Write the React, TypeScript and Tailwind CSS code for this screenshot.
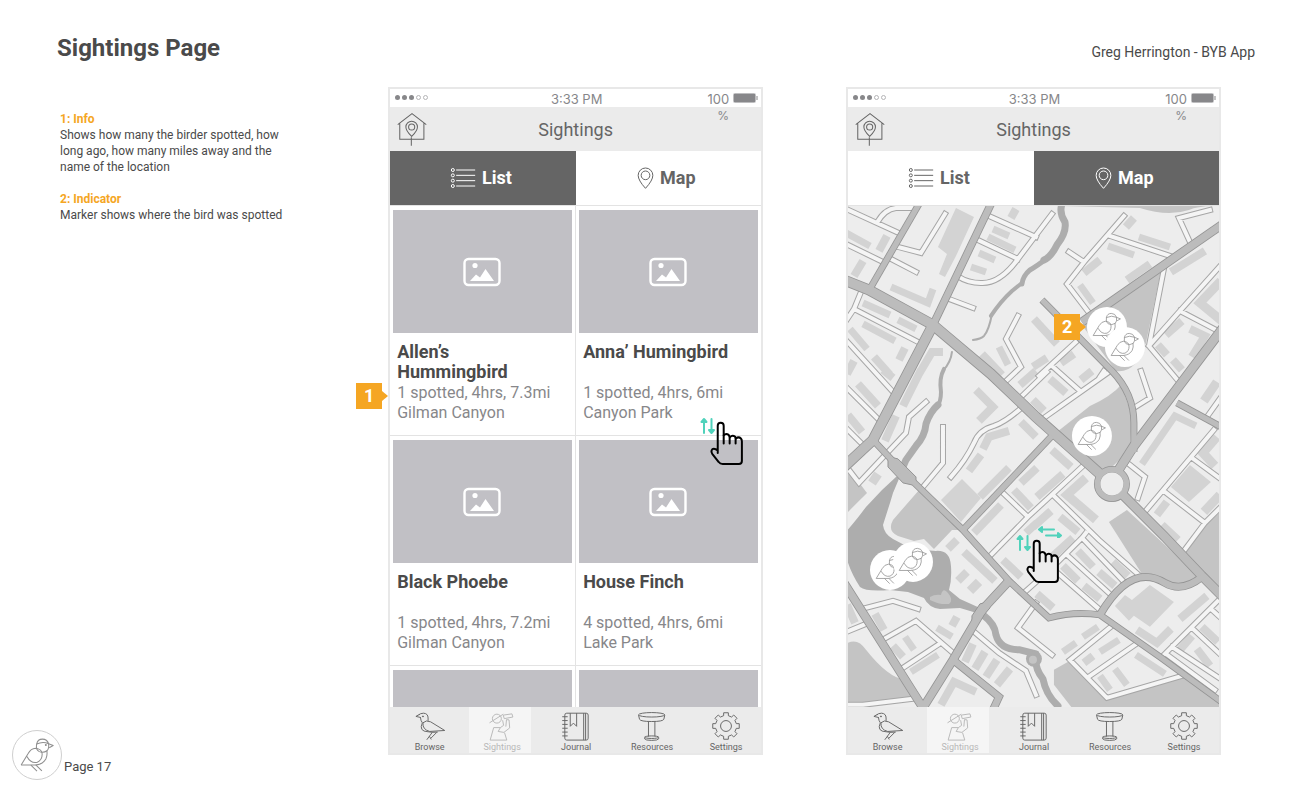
import type { ReactNode } from "react";

/* ---------- icons ---------- */

function Sparrow({ className }: { className: string }) {
  return (
    <svg viewBox="56 102 116 118" className={className} fill="none" stroke="currentColor" strokeWidth="3.4" strokeLinejoin="round" aria-hidden="true">
      <path d="M62 194 L85 156 Q94 140 109 139 Q130 141 131 158 Q131 178 115 185 Q94 190 81 166" />
      <path d="M62 194 H108 Q133 192 143 174 Q149 162 146 146" />
      <path d="M113 124 Q109 143 120 149 Q134 156 147 147 Q154 141 152 123" />
      <path d="M113 125 Q116 109 132 109 Q147 109 152 124 Q133 115 113 125Z" />
      <path d="M152 124 L167 130 L154 137" />
      <path d="M94 194 L114 214 M110 193 L130 213" />
      <circle cx="143" cy="128" r="1.6" fill="currentColor" />
    </svg>
  );
}

function Robin() {
  return (
    <svg viewBox="84 150 100 94" className="h-8 w-8" fill="none" stroke="currentColor" strokeWidth="3" strokeLinejoin="round" aria-hidden="true">
      <path d="M102 160 L90 167 L103 170 M99 163 Q103 157 114 157 Q128 158 128 172 V181" />
      <path d="M104 169 Q105 181 110 187 M112 187 Q122 177 136 184 L180 211 L133 214 Q110 208 112 187Z" />
      <path d="M110 187 Q98 214 128 215 Q140 218 158 216" />
      <path d="M141 217 L124 240 M155 217 L137 235 M132 229 L138 239" />
      <circle cx="112" cy="167" r="1.6" fill="currentColor" />
    </svg>
  );
}

function Birder() {
  return (
    <svg viewBox="312 150 100 94" className="h-8 w-8" fill="none" stroke="currentColor" strokeWidth="3" strokeLinejoin="round" aria-hidden="true">
      <circle cx="346" cy="174" r="14" />
      <path d="M323 187 L366 160 M366 163 L393 159 L396 169 L369 174Z" />
      <path d="M336 202 L325 241 H377 L370 218 M336 202 H357 L367 195 L364 179 M357 202 L350 214 L368 217 L386 203 L384 178 L376 177 L374 199" />
    </svg>
  );
}

function Notebook() {
  return (
    <svg viewBox="526 150 100 94" className="h-8 w-8" fill="none" stroke="currentColor" strokeWidth="3" strokeLinejoin="round" aria-hidden="true">
      <rect x="541" y="157" width="73" height="84" rx="6" />
      <path d="M600 157 V241 M606 157 V241 M558 157 V198 L568 188 L578 198 V157" />
      <path d="M533 168 H550 M533 180 H550 M533 192 H550 M533 204 H550 M533 216 H550 M533 228 H550" />
    </svg>
  );
}

function Stool() {
  return (
    <svg viewBox="757 150 100 94" className="h-8 w-8" fill="none" stroke="currentColor" strokeWidth="3" strokeLinejoin="round" aria-hidden="true">
      <ellipse cx="806" cy="162" rx="41" ry="7" />
      <path d="M765 163 L768 176 Q771 183 806 183 Q841 183 844 176 L847 163" />
      <path d="M796 183 V230 M816 183 V230" />
      <ellipse cx="806" cy="232" rx="22" ry="4" />
      <path d="M784 233 V237 Q786 242 806 242 Q826 242 828 237 V233" />
    </svg>
  );
}

function Gear() {
  const points: string[] = [];
  for (let i = 0; i < 8; i++) {
    for (const [offset, radius] of [[-13, 33], [-10, 42], [10, 42], [13, 33]]) {
      const angle = ((i * 45 + offset) * Math.PI) / 180;
      points.push(`${(50 + radius * Math.cos(angle)).toFixed(1)},${(47 + radius * Math.sin(angle)).toFixed(1)}`);
    }
  }
  return (
    <svg viewBox="0 0 100 94" className="h-8 w-8" fill="none" stroke="currentColor" strokeWidth="3" strokeLinejoin="round" aria-hidden="true">
      <polygon points={points.join(" ")} />
      <circle cx="50" cy="47" r="17" />
    </svg>
  );
}

function BirdhouseIcon() {
  return (
    <svg viewBox="40 86 88 100" className="h-[34px] w-[30px]" fill="none" stroke="currentColor" strokeWidth="3" aria-hidden="true">
      <path d="M42 123 L84 91 L126 123 M48 119 V166 H119 V119 M82 160 V185" />
      <circle cx="83" cy="130" r="9" />
      <path d="M83 158 Q66 141 66 130 A17 17 0 0 1 100 130 Q100 141 83 158Z" />
    </svg>
  );
}

function ListIcon() {
  return (
    <svg viewBox="198 250 77 66" className="h-[22px] w-[26px]" fill="none" stroke="currentColor" strokeWidth="3" aria-hidden="true">
      {[259, 275, 291, 307].map((y) => (
        <g key={y}>
          <circle cx="206" cy={y} r="4.5" />
          <path d={`M216 ${y} H273`} />
        </g>
      ))}
    </svg>
  );
}

function PinIcon() {
  return (
    <svg viewBox="762 250 50 66" className="h-[22px] w-[17px]" fill="none" stroke="currentColor" strokeWidth="3" aria-hidden="true">
      <circle cx="787" cy="275" r="13" />
      <path d="M787 314 Q765 290 765 275 A22 22 0 0 1 809 275 Q809 290 787 314Z" />
    </svg>
  );
}

function PictureIcon() {
  return (
    <svg viewBox="0 0 38 30" className="mr-[2px] h-[30px] w-[38px]" aria-hidden="true">
      <rect x="1.5" y="2" width="35" height="26" rx="4" fill="none" stroke="#fff" strokeWidth="2.4" />
      <circle cx="12" cy="8.5" r="2.6" fill="#fff" />
      <path d="M7 24 L13 17.5 L17 20.5 L22.5 12 L31 24Z" fill="#fff" />
    </svg>
  );
}

function Battery() {
  return (
    <svg viewBox="0 0 25 10" className="mt-1 h-[10px] w-[25px]" aria-hidden="true">
      <rect x="0.5" y="0.5" width="22" height="9" rx="1" fill="none" stroke="#bdbdbf" />
      <rect x="1" y="1" width="21" height="8" fill="#87878a" />
      <path d="M23.5 3 h1 v4 h-1z" fill="#87878a" />
    </svg>
  );
}

function Hand({ fill = "none" }: { fill?: string }) {
  return (
    <svg viewBox="980 275 102 136" className="h-[45px] w-[34px]" fill={fill} stroke="#000" strokeWidth="6" strokeLinejoin="round" strokeLinecap="round" aria-hidden="true">
      <path d="M1003 372 V289 Q1003 280 1012 280 Q1021 280 1021 289 V318 Q1028 311 1036 317 L1040 324 Q1047 316 1055 322 L1058 328 Q1066 321 1073 328 Q1076 331 1076 337 V396 Q1076 405 1067 405 H1018 Q1010 405 1006 399 L987 375 Q981 366 987 360 Q993 356 1003 364" />
      <path d="M1021 318 V343 M1039 323 V343 M1057 328 V343" fill="none" />
    </svg>
  );
}

function SwipeArrows({ className }: { className: string }) {
  return (
    <svg viewBox="0 0 16 18" className={className} fill="none" stroke="#50d2bb" strokeWidth="2" strokeLinecap="round" strokeLinejoin="round" aria-hidden="true">
      <path d="M4 16 V3 M1.5 5 L4 2 L6.500 5Z M11.500 2 V15 M9 13 L11.500 16 L14 13Z" />
    </svg>
  );
}

/* ---------- map ---------- */

type Road = [width: number, path: string];

const parks = [
  "M1161 271 L1146 343 Q1136 374 1116 371 L1082 325Z",
  "M1121 385 Q1112 396 1090 406 L1057 432 L1100 472 L1112 467 L1130 450 L1132 415Z",
  "M920 489 L893 520 Q887 531 898 536 L914 541 L924 539 L934 549 L952 530 L963 530Z",
  "M848 468 L867 493 L848 512Z",
  "M848 643 Q858 638 866 650 Q888 678 905 680 L917 697 L863 706 H848Z",
  "M1070 661 L1054 670 V685 L1072 708 H1221 V704 L1182 676 L1107 699Z",
  "M1127 510 L1109 522 L1144 577 Q1155 573 1178 585 L1200 577Z",
  "M1221 511 L1190 540 L1184 552 L1221 590Z",
  "M1060 206 L1140 208 Q1168 217 1189 210 Q1198 206 1216 206Z",
];

const rivers: Road[] = [
  [7, "M1062 204 Q1059 213 1065 222 Q1067 232 1057 245 Q1051 257 1044 260"],
  [5, "M1046 259 Q1037 266 1030 270 Q1023 276 1022 284"],
  [4, "M1022 283 L1012 291 Q1000 302 991 316"],
  [2, "M992 314 Q989 330 984 336 Q981 339 973 340"],
  [2, "M952 352 Q951 362 943 371"],
  [4, "M944 369 Q939 378 941 392 Q941 402 937 407"],
  [7, "M938 405 Q930 412 926 424 Q925 436 916 446 L906 460 L900 474"],
  [7, "M983 615 Q995 624 996 635 Q1000 650 1020 650 L1036 654 Q1034 668 1043 679 Q1046 695 1058 706"],
];

const buildings: Road[] = [
  [7, "M846 233L870 246M891 287L928 303L933 289M993 229L1009 236M988 237L1015 250M979 253L995 260M971 267L986 272M863 303L890 315M863 324L895 341M898 320L916 329M850 329L867 349M999 347L1008 365M1139 237L1170 247M1108 246L1134 255M1080 285L1093 303M1142 464L1175 416L1196 426M937 628L952 637M905 637L914 650M911 672L938 655M1083 637L1098 627M1063 652L1076 643M1100 652L1119 640M1136 655L1165 674M1100 676L1110 690M1115 669L1127 685"],
  [8, "M879 251L887 236M854 276L863 261M1011 218L1016 209M899 360L905 348M874 357L890 375M847 374L854 361M919 374L932 352L943 352M982 354L1002 375M858 384L878 406M883 370L893 378M921 370L903 406M848 415L862 432M896 416L885 441M976 390L993 407L979 421M1009 431L989 437L983 449M981 455L969 471M1009 468L980 497M1001 505L974 533M1014 490L1031 508M1020 385L1036 371M1021 422L1036 437M1021 483L1037 468M1026 533L1037 523"],
  [8, "M1126 227L1134 218M1084 273L1100 260M1127 280L1150 264M1171 272L1205 251M1034 319L1057 344M1166 335L1182 321M1190 329L1205 336L1192 357M1158 345L1167 355M1173 360L1182 370M1061 363L1074 354M1033 367L1047 358M1050 379L1066 393M1033 400L1044 411M1081 380L1092 371M1052 450L1071 467M1037 497L1063 474M1157 515L1167 502M1162 525L1178 540M1033 527L1051 511M1060 517L1078 532"],
  [8, "M948 549L957 540M964 552L995 581M958 581L967 572M1003 560L1021 577M875 614L884 630M952 626L957 617M893 646L903 657M965 662L973 644M975 669L985 652M986 677L997 660M997 685L1010 669M941 705L954 682L976 692M847 605L855 623M1063 566L1078 581M1078 551L1093 567M1084 586L1100 599M1099 572L1115 586M1113 562L1128 576M1037 594L1053 608M1180 619L1207 596M1137 630L1157 643L1171 629M1084 663L1093 656M1180 650L1192 636M1197 649L1210 666M1202 627L1218 642M1052 557L1073 538"],
  [9, "M872 483L878 474M1221 281L1200 303L1222 321M1204 401L1217 382M1086 478L1067 495L1096 520M1217 437L1203 453L1215 466M1204 512L1220 495M970 591L979 582"],
];

const blocks = [
  "M956 208L974 217L956 256L945 277L939 274L947 254L938 247Z",
  "M962 479L981 498L961 522L941 500Z",
  "M1190 465L1211 482L1189 502L1171 487Z",
  "M1150 585L1174 602L1150 627L1134 616L1129 621L1115 606L1125 595L1132 600Z",
];

const streets =
  "M844 208L901 234M878 221Q885 209 896 208L916 208M844 243L883 262M898 247L921 253L945 214M891 259L916 272M989 216L1036 237M978 240L1018 259M1052 214L1018 259Q1000 284 981 283Q968 283 959 277M949 299L973 308M861 292L854 309L844 324M854 309L918 342M844 338L893 392M1018 316L1006 339L1021 367L1004 383M844 385L879 420M844 426L863 445M926 402L909 417L906 433L859 483L849 470M943 427V463L923 487M951 477Q966 460 974 443Q979 430 994 426Q1005 422 1019 410M1047 372L1018 400M1003 493L1028 517L991 555" +
  "M1124 216L1085 261L1067 284L1090 314M1110 236L1170 256M1069 252L1084 262M1210 210L1179 218L1190 242M1164 269L1149 346L1180 383M1222 264L1180 311L1149 346M1180 311L1222 333M1077 341L1039 376M1052 366L1079 390M1109 372L1044 418M1104 371L1100 377M1141 371L1150 398L1134 408M1082 467L1028 517M1055 497L1099 540L1139 575M1130 465L1145 477L1138 498M1214 430L1144 513M1207 417L1222 396M1192 458L1222 480M1165 492L1205 523L1222 506M1205 523L1184 551" +
  "M1082 538L1052 568L1026 591M1052 568L1100 610M1067 555L1112 596M1082 538L1125 583M1086 533L1082 538M1036 603L1018 628L1052 655M973 631L999 653L1026 671L1036 695M866 608L893 601L918 609M886 638L916 621L953 653M903 668L938 645M844 633L866 624M844 705L863 705L913 699M1112 626L1070 660L1107 698L1182 676M1135 645L1090 676M1222 597L1164 655M1166 654L1215 690M1192 628L1222 656M1211 609L1222 619M1172 647L1222 680";

const roads: Road[] = [
  [7, "M919 204L871 287"],
  [8, "M991 204L933 325"],
  [11, "M933 325L873 440L844 467"],
  [11, "M844 280L869 290L933 325L991 374L1036 417L1100 474"],
  [10, "M1118 490L1165 537L1202 576L1223 597"],
  [7, "M873 440L901 470L963 530L1009 581L1049 618Q1075 611 1100 615L1160 657L1223 703"],
  [7, "M963 530L1052 436"],
  [9, "M1009 581L983 609L953 660L923 708L844 583"],
  [8, "M953 660L999 697L993 710"],
  [9, "M1223 224L1082 322"],
  [7, "M1042 300L1112 371Q1134 394 1134 423V452"],
  [10, "M1223 328L1134 446L1118 471"],
  [7, "M1177 403L1223 428"],
  [8, "M1100 615Q1122 577 1146 577Q1155 577 1165 583Q1182 593 1202 577"],
];

function MapMarker({ x, y, r = 20 }: { x: number; y: number; r?: number }) {
  return (
    <g transform={`translate(${x} ${y})`}>
      <circle r={r} fill="#fff" />
      <g transform="scale(.26) translate(-115 -161)" fill="none" stroke="#8f8f8f" strokeWidth="3" strokeLinejoin="round">
        <path d="M62 194 L85 156 Q94 140 109 139 Q130 141 131 158 Q131 178 115 185 Q94 190 81 166" />
        <path d="M62 194 H108 Q133 192 143 174 Q149 162 146 146" />
        <path d="M113 124 Q109 143 120 149 Q134 156 147 147 Q154 141 152 123" />
        <path d="M113 125 Q116 109 132 109 Q147 109 152 124 Q133 115 113 125Z" />
        <path d="M152 124 L167 130 L154 137 M94 194 L114 214 M110 193 L130 213" />
      </g>
    </g>
  );
}

function CityMap() {
  return (
    <svg viewBox="848 206 371 501" preserveAspectRatio="xMidYMid slice" className="h-full w-full bg-[#ededed]" fill="none" role="img" aria-label="Map of sightings">
      {parks.map((d) => (
        <path key={d} d={d} fill="#c4c4c4" />
      ))}
      <g stroke="#adadad" strokeLinejoin="round" strokeLinecap="round">
        {rivers.map(([w, d]) => (
          <path key={d} d={d} strokeWidth={w} />
        ))}
      </g>
      <path
        d="M901 474L893 493L890 503L883 525Q884 534 893 539L912 549L936 551Q950 550 951 566Q952 580 949 590L960 599L980 608L976 613L960 608L940 609Q929 608 924 598L908 592L890 590Q866 592 860 587Q850 572 846 556V532Q858 518 866 507L882 490L896 477Z"
        fill="#adadad"
      />
      <path d="M930 597Q935 594 941 595Q943 587 948 593Q954 600 949 604Q940 605 930 600Z" fill="#c4c4c4" />
      <circle cx="1034" cy="659" r="8" fill="#adadad" />
      <circle cx="1033" cy="660" r="4" fill="#c4c4c4" />
      <g stroke="#d3d3d3" strokeLinejoin="miter">
        {buildings.map(([w, d]) => (
          <path key={d} d={d} strokeWidth={w} />
        ))}
      </g>
      {blocks.map((d) => (
        <path key={d} d={d} fill="#d3d3d3" />
      ))}
      <path d={streets} stroke="#a6a6a6" strokeWidth="6" strokeLinecap="square" />
      <path d={streets} stroke="#f5f5f5" strokeWidth="4" strokeLinecap="square" />
      <g stroke="#949494">
        {roads.map(([w, d]) => (
          <path key={d} d={d} strokeWidth={w} />
        ))}
        <circle cx="1112" cy="484" r="14.500" strokeWidth="7" />
        <path d="M888 460L890 457L898 459L916 477V483L912 485L903 483L888 467Z" fill="#bcbcbc" />
        <path d="M972 616L980 604L988 602L990 608L979 621L972 622Z" fill="#bcbcbc" />
      </g>
      <g stroke="#bcbcbc">
        {roads.map(([w, d]) => (
          <path key={d} d={d} strokeWidth={w - 1.6} />
        ))}
        <circle cx="1112" cy="484" r="14.500" strokeWidth="5.500" />
      </g>
      <circle cx="1112" cy="484" r="11.500" fill="#ededed" />
      <MapMarker x={1107} y={327} />
      <MapMarker x={1125} y={347} />
      <MapMarker x={1092} y={436} />
      <MapMarker x={890} y={570} />
      <MapMarker x={913} y={562} />
    </svg>
  );
}

/* ---------- app parts ---------- */

function StatusBar() {
  return (
    <div className="relative z-10 flex h-[18px] items-start bg-white font-['Inter',sans-serif] text-[13px] leading-5 text-[#87878a]">
      <div className="flex flex-1 gap-[2px] pt-[6px] pl-[5px]" role="img" aria-label="Signal 3 of 5">
        {[1, 2, 3, 4, 5].map((n) => (
          <span key={n} className={n <= 3 ? "size-[5px] rounded-full bg-[#87878a]" : "size-[5px] rounded-full border border-[#b5b5b7]"} />
        ))}
      </div>
      <span>3:33 PM</span>
      <div className="flex flex-1 justify-end gap-1 pr-[3px]">
        <span className="w-6 pt-[2px] text-right leading-4">
          100 <span className="text-xs">%</span>
        </span>
        <Battery />
      </div>
    </div>
  );
}

type View = "list" | "map";

function Tabs({ active }: { active: View }) {
  const on = "flex items-center justify-center gap-[6px] bg-[#656565] pr-1 text-lg font-bold text-white";
  const off = "flex items-center justify-center gap-[6px] bg-white pr-1 text-lg font-bold text-[#656565]";
  return (
    <div role="tablist" className="grid h-[55px] shrink-0 grid-cols-2 border-b border-[#e3e3e3]">
      <button type="button" role="tab" aria-selected={active === "list"} className={active === "list" ? on : off}>
        <ListIcon />
        List
      </button>
      <button type="button" role="tab" aria-selected={active === "map"} className={active === "map" ? on : off}>
        <PinIcon />
        Map
      </button>
    </div>
  );
}

function BottomNav() {
  const items: [string, ReactNode][] = [
    ["Browse", <Robin />],
    ["Sightings", <Birder />],
    ["Journal", <Notebook />],
    ["Resources", <Stool />],
    ["Settings", <Gear />],
  ];
  return (
    <nav className="grid h-[46px] shrink-0 grid-cols-[79fr_62fr_90fr_62fr_78fr] bg-[#ebebeb]">
      {items.map(([label, icon]) => (
        <a
          key={label}
          href={`#${label.toLowerCase()}`}
          className={
            label === "Sightings"
              ? "flex flex-col items-center bg-[#f5f5f5] pt-[3px] pl-1 text-[9px] leading-[10px] text-[#b8b8b8]"
              : label === "Settings"
                ? "flex flex-col items-center pt-[3px] pl-2 text-[9px] leading-[10px] text-[#656565]"
                : "flex flex-col items-center pt-[3px] text-[9px] leading-[10px] text-[#656565]"
          }
        >
          {icon}
          {label}
        </a>
      ))}
    </nav>
  );
}

function Phone({ active, children, overlay }: { active: View; children: ReactNode; overlay: ReactNode }) {
  return (
    <section className="relative min-w-0 flex-1">
      <div className="flex aspect-[375/668] flex-col border-2 border-[#e8e8e8]">
        <StatusBar />
        <header className="relative flex h-11 shrink-0 items-center justify-center bg-[#ebebeb] pt-[2px] text-[#656565]">
          <a href="#home" aria-label="Home" className="absolute top-[5px] left-[7px]">
            <BirdhouseIcon />
          </a>
          <h2 className="text-lg">Sightings</h2>
        </header>
        <Tabs active={active} />
        <div className="min-h-0 flex-1 overflow-hidden">{children}</div>
        <BottomNav />
      </div>
      {overlay}
    </section>
  );
}

function Callout({ n, className }: { n: number; className: string }) {
  return (
    <div className={className}>
      <span className="flex size-[26px] items-center justify-center bg-[#f5a623] text-lg font-bold text-white">{n}</span>
      <span className="border-y-[5px] border-l-[6px] border-y-transparent border-l-[#f5a623]" />
    </div>
  );
}

const sightings = [
  { name: "Allen’s Hummingbird", info: "1 spotted, 4hrs, 7.3mi", place: "Gilman Canyon" },
  { name: "Anna’ Humingbird", info: "1 spotted, 4hrs, 6mi", place: "Canyon Park" },
  { name: "Black Phoebe", info: "1 spotted, 4hrs, 7.2mi", place: "Gilman Canyon" },
  { name: "House Finch", info: "4 spotted, 4hrs, 6mi", place: "Lake Park" },
];

function SightingList() {
  return (
    <ul className="grid grid-cols-2 gap-px bg-[#e3e3e3]">
      {sightings.map((s) => (
        <li key={s.name} className="bg-white px-[3px] pt-1 pb-3">
          <div className="flex h-[123px] items-center justify-center bg-[#c1c0c5]">
            <PictureIcon />
          </div>
          <div className="pt-[9px] pl-1">
            <h3 className="min-h-10 pr-4 text-lg leading-5 font-bold text-[#4a4a4a]">{s.name}</h3>
            <p className="mt-px text-base leading-5 text-[#87878a]">{s.info}</p>
            <p className="text-base leading-5 text-[#87878a]">{s.place}</p>
          </div>
        </li>
      ))}
      {[0, 1].map((n) => (
        <li key={n} className="bg-white px-[3px] pt-1">
          <div className="h-[123px] bg-[#c1c0c5]" />
        </li>
      ))}
    </ul>
  );
}

export default function App() {
  return (
    <div className="flex min-h-screen flex-col bg-white font-['Roboto',sans-serif] text-[#4a4a4a]">
      <header className="flex h-[87px] items-center justify-between pt-2 pr-[39px] pl-[57px]">
        <h1 className="text-2xl font-bold">Sightings Page</h1>
        <p className="pt-2 text-sm">Greg Herrington - BYB App</p>
      </header>
      <div className="flex flex-1">
        <aside className="flex w-[30%] shrink-0 flex-col justify-between">
          <div className="max-w-[300px] pt-6 pl-[60px] text-xs leading-4">
            <h2 className="font-bold text-[#f5a623]">1: Info</h2>
            <p>Shows how many the birder spotted, how long ago, how many miles away and the name of the location</p>
            <h2 className="mt-4 font-bold text-[#f5a623]">2: Indicator</h2>
            <p>Marker shows where the bird was spotted</p>
          </div>
          <footer className="flex items-center gap-[2px] pb-3 pl-3">
            <span className="flex size-[50px] items-center justify-center rounded-full border border-[#cfcfcf] text-[#8f8f8f]">
              <Sparrow className="size-9" />
            </span>
            <span className="pt-6 text-[13px]">Page 17</span>
          </footer>
        </aside>
        <main className="flex min-w-0 flex-1 items-start gap-[83px] pr-[73px]">
          <Phone
            active="list"
            overlay={
              <>
                <Callout n={1} className="absolute top-[296px] -left-8 flex items-center" />
                <SwipeArrows className="absolute top-[330px] left-[312px] h-[18px] w-4" />
                <div className="absolute top-[334px] left-[322px]">
                  <Hand />
                </div>
              </>
            }
          >
            <SightingList />
          </Phone>
          <Phone
            active="map"
            overlay={
              <>
                <Callout n={2} className="absolute top-[227px] left-[208px] flex items-center" />
                <SwipeArrows className="absolute top-[447px] left-[170px] h-[18px] w-4" />
                <svg viewBox="0 0 26 12" className="absolute top-[439px] left-[191px] h-3 w-[26px]" fill="none" stroke="#50d2bb" strokeWidth="2" strokeLinecap="round" strokeLinejoin="round" aria-hidden="true">
                  <path d="M17 3.500 H4 M5 1 L2 3.500 L5 6Z M9 9.500 H22 M21 7 L24 9.500 L21 12Z" />
                </svg>
                <div className="absolute top-[452px] left-[180px]">
                  <Hand fill="#ededed" />
                </div>
              </>
            }
          >
            <CityMap />
          </Phone>
        </main>
      </div>
    </div>
  );
}
